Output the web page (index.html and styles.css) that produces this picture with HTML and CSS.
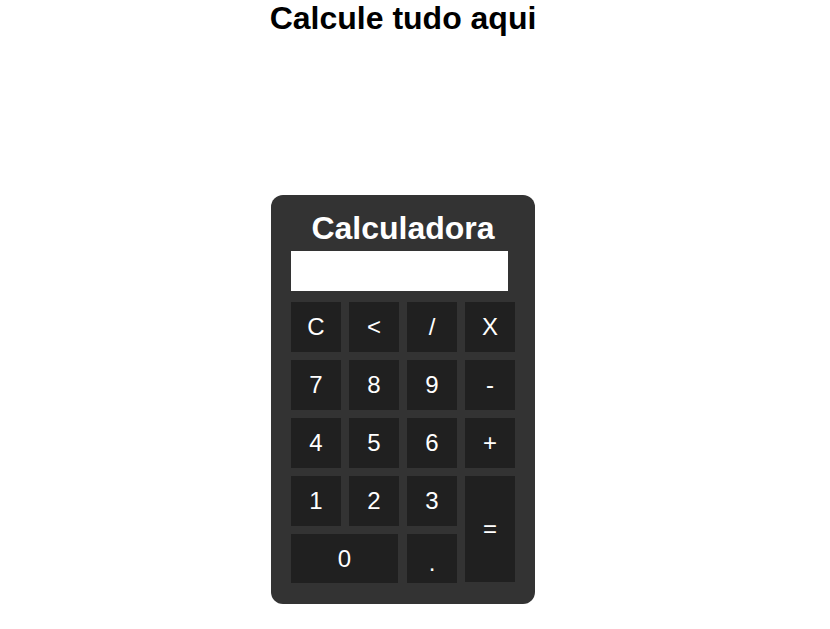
FILE: index.html
```html
<!DOCTYPE html>
<html lang="pt">
<head>
<meta charset="utf-8">
<title>Calculadora</title>
<link rel="stylesheet" href="styles.css">
</head>
<body>
<div class="page">
  <h1 class="page-title">Calcule tudo aqui</h1>
  <div class="calc">
    <h2 class="calc-title">Calculadora</h2>
    <div class="display"></div>
    <div class="keys">
      <button class="key">C</button>
      <button class="key">&lt;</button>
      <button class="key">/</button>
      <button class="key">X</button>
      <button class="key">7</button>
      <button class="key">8</button>
      <button class="key">9</button>
      <button class="key">-</button>
      <button class="key">4</button>
      <button class="key">5</button>
      <button class="key">6</button>
      <button class="key">+</button>
      <button class="key">1</button>
      <button class="key">2</button>
      <button class="key">3</button>
      <button class="key key-eq">=</button>
      <button class="key key-zero">0</button>
      <button class="key key-dot">.</button>
    </div>
  </div>
</div>
</body>
</html>
```

FILE: styles.css
```css
html, body {
  margin: 0;
  padding: 0;
  background: #ffffff;
  font-family: "Liberation Sans", Arial, sans-serif;
}

.page {
  width: 806px;
  display: flex;
  flex-direction: column;
  align-items: center;
}

.page-title {
  margin: 0;
  font-size: 32px;
  font-weight: bold;
  line-height: 36px;
  color: #000;
}

.calc {
  margin-top: 159px;
  width: 224px;
  padding: 15px 20px 20px;
  background: #333333;
  border-radius: 12px;
}

.calc-title {
  margin: 0;
  text-align: center;
  color: #fff;
  font-size: 32px;
  font-weight: bold;
  line-height: 37px;
}

.display {
  margin-top: 4px;
  width: 217px;
  height: 40px;
  background: #fff;
}

.keys {
  margin-top: 11px;
  display: grid;
  grid-template-columns: repeat(4, 50px);
  grid-auto-rows: 50px;
  gap: 8px;
}

.key {
  border: none;
  margin: 0;
  padding: 0;
  background: #202020;
  color: #fff;
  font-family: "Liberation Sans", Arial, sans-serif;
  font-size: 24px;
  display: flex;
  align-items: center;
  justify-content: center;
}

.key-zero {
  grid-column: 1 / 3;
  width: 107px;
  height: 49px;
}

.key-dot {
  height: 49px;
  padding-top: 8px;
}

.key-eq {
  grid-row: span 2;
  height: 106px;
}
```
